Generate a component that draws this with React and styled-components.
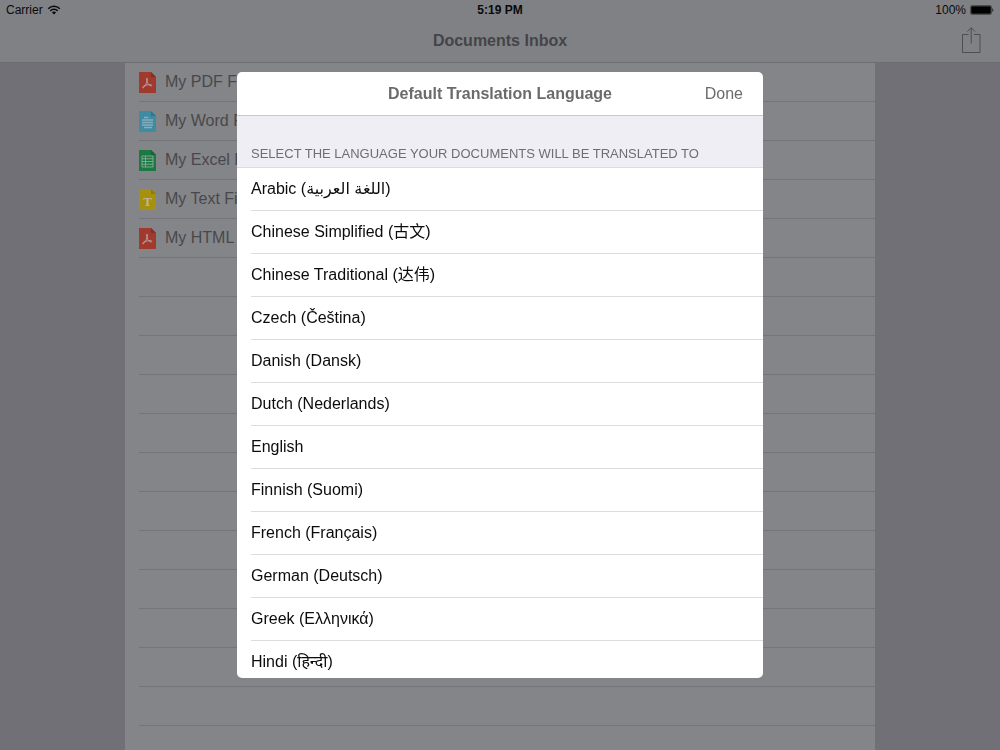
import React from "react";
import styled, { createGlobalStyle } from "styled-components";

const Global = createGlobalStyle`
  *, *::before, *::after { box-sizing: border-box; }
  body {
    margin: 0;
    background: #717076;
    font-family: "Liberation Sans", "DejaVu Sans", "Noto Sans CJK SC", "Noto Sans Devanagari", sans-serif;
  }
  h1, h2, h3, p, ul { margin: 0; padding: 0; }
  ul { list-style: none; }
  button { margin: 0; padding: 0; border: 0; background: none; font: inherit; cursor: pointer; }
`;

const Screen = styled.div`
  display: flex;
  flex-direction: column;
  height: 100vh;
  overflow: hidden;
`;

const TopBar = styled.header`
  flex: none;
  background: #808184;
  border-bottom: 1px solid #6d6d71;
`;

const StatusBar = styled.div`
  display: grid;
  grid-template-columns: 1fr auto 1fr;
  align-items: center;
  height: 20px;
  padding: 0 6px;
  font-size: 12px;
  color: #0a0a0b;
`;

const StatusGroup = styled.div`
  display: flex;
  align-items: center;
  gap: 4px;
  justify-content: ${(p) => (p.$end ? "flex-end" : "flex-start")};
`;

const Clock = styled.span`
  font-weight: bold;
`;

const NavBar = styled.div`
  display: grid;
  grid-template-columns: 1fr auto 1fr;
  align-items: center;
  height: 42px;
  padding: 0 18px;
`;

const NavTitle = styled.h1`
  grid-column: 2;
  font-size: 16px;
  line-height: 20px;
  color: #444448;
`;

const ShareButton = styled.button`
  justify-self: end;
  width: 22px;
  height: 28px;
  color: #4e4e52;
  svg { display: block; }
`;

const Inbox = styled.main`
  flex: 1;
  width: 75%;
  margin: 0 auto;
  padding-left: 14px;
  background: #848589;
  overflow: hidden;
`;

const DocumentRow = styled.li`
  height: 39px;
  border-bottom: 1px solid #757579;
`;

const DocumentLink = styled.a`
  display: flex;
  align-items: center;
  gap: 9px;
  height: 38px;
  font-size: 16px;
  color: #48484c;
  text-decoration: none;
`;

const Backdrop = styled.div`
  position: fixed;
  inset: 0;
  display: flex;
  align-items: center;
  justify-content: center;
  padding: 72px 16px;
`;

const Dialog = styled.section`
  display: flex;
  flex-direction: column;
  width: 100%;
  max-width: 526px;
  height: 100%;
  border-radius: 5px;
  background: #fff;
  overflow: hidden;
`;

const DialogBar = styled.div`
  flex: none;
  display: grid;
  grid-template-columns: 1fr auto 1fr;
  align-items: center;
  height: 44px;
  padding: 0 20px;
  border-bottom: 1px solid #c9c8cc;
  color: #6b6b6b;
`;

const DialogTitle = styled.h2`
  grid-column: 2;
  font-size: 16px;
  line-height: 20px;
`;

const DoneButton = styled.button`
  justify-self: end;
  font-size: 16px;
  line-height: 20px;
  color: #6b6b6b;
`;

const SectionHeader = styled.h3`
  flex: none;
  display: flex;
  align-items: flex-end;
  height: 52px;
  padding: 0 14px 5px;
  border-bottom: 1px solid #dcdbe0;
  background: #efeef4;
  font-size: 13px;
  line-height: 16px;
  font-weight: normal;
  text-transform: uppercase;
  color: #6d6d72;
`;

const LanguageList = styled.ul`
  flex: 1;
  min-height: 0;
  padding-left: 14px;
  overflow-y: auto;
  scrollbar-width: none;
`;

const LanguageRow = styled.li`
  height: 43px;
  border-bottom: 1px solid #dcdcde;
`;

const LanguageButton = styled.button`
  display: block;
  width: 100%;
  height: 42px;
  overflow: hidden;
  font-size: 16px;
  line-height: 42px;
  text-align: left;
  color: #0c0c0c;
`;

const pageColors = { pdf: "#a03a2e", word: "#408ba4", excel: "#1b7a43", text: "#a8900f" };
const foldColors = { pdf: "#842f25", word: "#327489", excel: "#156336", text: "#8f7a0c" };

const PdfMark = () => (
  <path
    d="M8 6.200c-.9 0-.6 2 .2 3.900.8 1.800 2.500 3.800 3.900 3.900 1.200 0 1-1.400-1.300-1.400-2.500 0-6.200 1.100-7 2.300-.6 1.100.6 1.500 1.700-.3C6.900 12.500 8.200 9.800 8.500 8.200c.1-1.100 0-2-.5-2z"
    fill="none"
    stroke="#b9a19e"
    strokeWidth="1"
  />
);

const WordMark = () => (
  <path d="M5 6.500h4.500M3 9h11M3 11.500h11M3 14h11M5 16.500h8" stroke="#84aebb" strokeWidth="1.400" fill="none" />
);

const ExcelMark = () => (
  <path
    d="M3 6h11v11H3zM3 8.750h11M3 11.500h11M3 14.250h11M6.500 6v11"
    stroke="#8aab97"
    strokeWidth="0.900"
    fill="none"
  />
);

const TextMark = () => (
  <text x="8.500" y="16.500" textAnchor="middle" fontFamily="Liberation Serif, serif" fontWeight="bold" fontSize="13" fill="#bfb791">
    T
  </text>
);

const marks = { pdf: PdfMark, word: WordMark, excel: ExcelMark, text: TextMark };

function FileIcon({ kind }) {
  const Mark = marks[kind];
  return (
    <svg width="17" height="21" viewBox="0 0 17 21" aria-hidden="true">
      <path d="M0 0h12l5 5v16H0z" fill={pageColors[kind]} />
      <path d="M12 0v5h5z" fill={foldColors[kind]} />
      <Mark />
    </svg>
  );
}

const WifiIcon = () => (
  <svg width="14" height="10" viewBox="0 0 14 10" aria-hidden="true">
    <g fill="none" stroke="#0a0a0b" strokeWidth="1.500">
      <path d="M1.200 3.700a8.200 8.200 0 0 1 11.600 0" />
      <path d="M3.300 5.900a5.200 5.200 0 0 1 7.400 0" />
    </g>
    <path d="M7 9.600L4.900 7.500a3 3 0 0 1 4.200 0z" fill="#0a0a0b" />
  </svg>
);

const BatteryIcon = () => (
  <svg width="24" height="10" viewBox="0 0 24 10" aria-hidden="true">
    <rect x=".5" y=".5" width="21" height="9" rx="1.500" fill="none" stroke="#2b2b2d" strokeWidth=".6" />
    <rect x="1.200" y="1.200" width="19.600" height="7.600" rx="1" fill="#000" />
    <path d="M22.300 3.200c1.400.4 1.400 3.200 0 3.600z" fill="#1a1a1b" />
  </svg>
);

const ShareIcon = () => (
  <svg width="22" height="28" viewBox="0 0 22 28" fill="none" stroke="currentColor" strokeWidth="1" aria-hidden="true">
    <path d="M8.500 7.500H2.500v18h17.500v-18h-6M11.200 16.500V.8M7.300 4.600l3.900-3.900 3.900 3.900" />
  </svg>
);

const documents = [
  { name: "My PDF File", kind: "pdf" },
  { name: "My Word File", kind: "word" },
  { name: "My Excel File", kind: "excel" },
  { name: "My Text File", kind: "text" },
  { name: "My HTML File", kind: "pdf" },
];

const EMPTY_ROWS = 12;

const languages = [
  "Arabic (اللغة العربية)",
  "Chinese Simplified (古文)",
  "Chinese Traditional (达伟)",
  "Czech (Čeština)",
  "Danish (Dansk)",
  "Dutch (Nederlands)",
  "English",
  "Finnish (Suomi)",
  "French (Français)",
  "German (Deutsch)",
  "Greek (Ελληνικά)",
  "Hindi (हिन्दी)",
];

export default function App() {
  return (
    <>
      <Global />
      <Screen>
        <TopBar>
          <StatusBar>
            <StatusGroup>
              <span>Carrier</span>
              <WifiIcon />
            </StatusGroup>
            <Clock>5:19 PM</Clock>
            <StatusGroup $end>
              <span>100%</span>
              <BatteryIcon />
            </StatusGroup>
          </StatusBar>
          <NavBar>
            <NavTitle>Documents Inbox</NavTitle>
            <ShareButton type="button" aria-label="Share">
              <ShareIcon />
            </ShareButton>
          </NavBar>
        </TopBar>
        <Inbox>
          <ul>
            {documents.map((doc) => (
              <DocumentRow key={doc.name}>
                <DocumentLink href="#">
                  <FileIcon kind={doc.kind} />
                  {doc.name}
                </DocumentLink>
              </DocumentRow>
            ))}
            {Array.from({ length: EMPTY_ROWS }, (_, i) => (
              <DocumentRow key={i} aria-hidden="true" />
            ))}
          </ul>
        </Inbox>
      </Screen>
      <Backdrop>
        <Dialog role="dialog" aria-modal="true" aria-labelledby="dialog-title">
          <DialogBar>
            <DialogTitle id="dialog-title">Default Translation Language</DialogTitle>
            <DoneButton type="button">Done</DoneButton>
          </DialogBar>
          <SectionHeader>Select the language your documents will be translated to</SectionHeader>
          <LanguageList>
            {languages.map((language) => (
              <LanguageRow key={language}>
                <LanguageButton type="button">{language}</LanguageButton>
              </LanguageRow>
            ))}
          </LanguageList>
        </Dialog>
      </Backdrop>
    </>
  );
}
